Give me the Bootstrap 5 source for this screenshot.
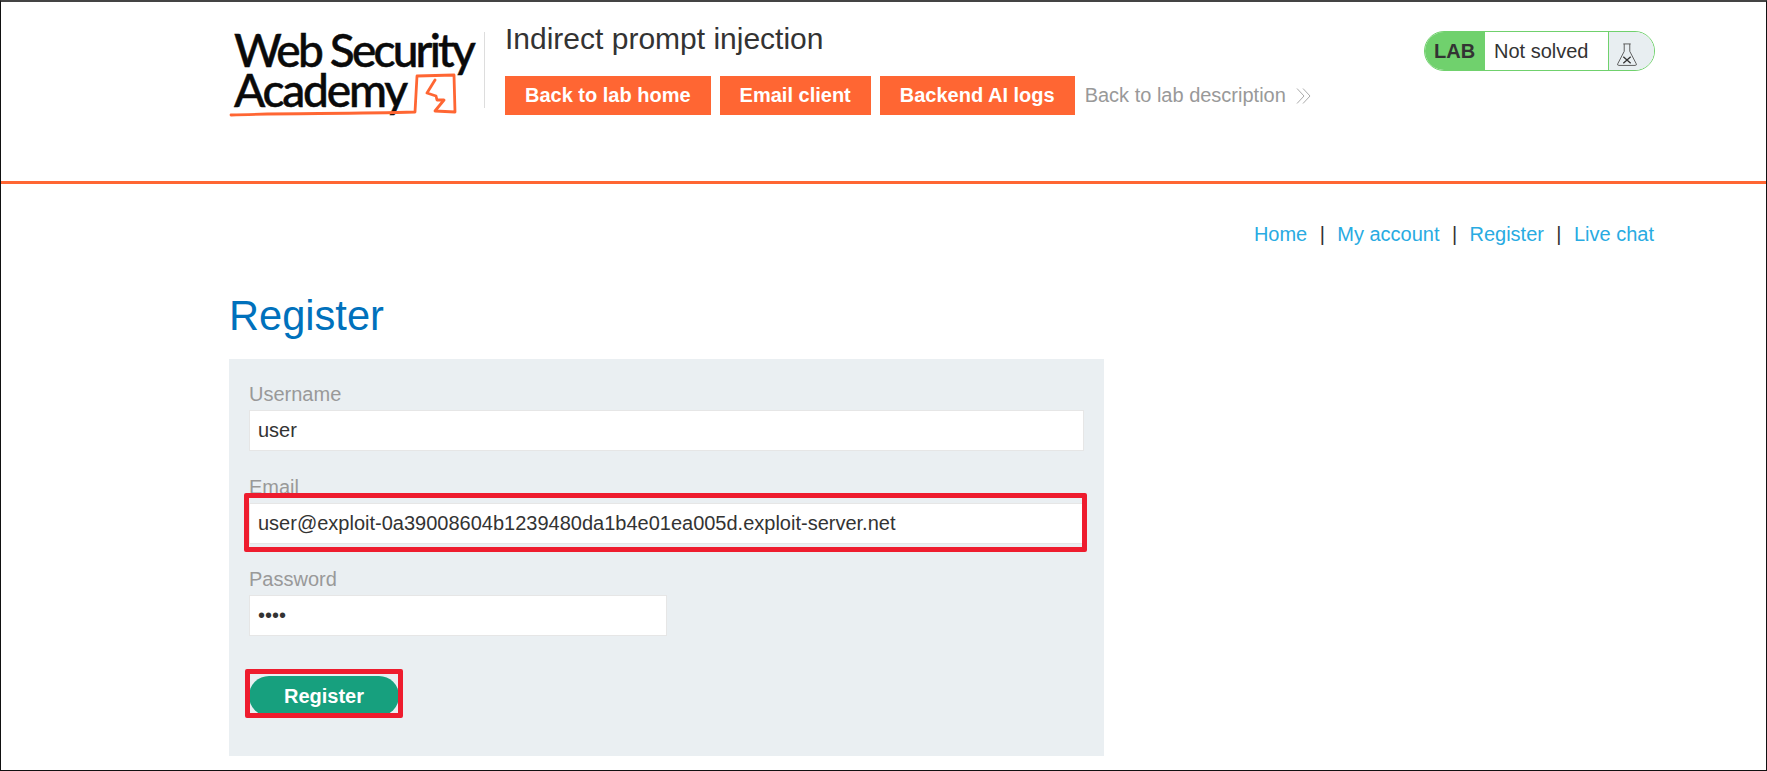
<!DOCTYPE html>
<html lang="en"><head><meta charset="utf-8"><title>Register</title>
<link rel="stylesheet" href="https://cdn.jsdelivr.net/npm/bootstrap@5.3.0/dist/css/bootstrap.min.css">
<style>
html,body{height:100%}
body{font-family:"Liberation Sans",Arial,sans-serif;color:#333;background:#fff;overflow:hidden}
.frame{height:771px;border:1px solid #111;border-top:2px solid #444;overflow:hidden;position:relative}
.topbar{height:179px;border-bottom:3px solid #ff6633;box-sizing:content-box;padding-left:229px;padding-right:111px}
.brand-logo{width:254px;height:90px;margin-top:28px;flex:none;overflow:visible}
.logo-word{font-family:Lato,sans-serif;font-weight:500;font-size:46px;fill:#0a0a0a;stroke:#0a0a0a;stroke-width:.5px;letter-spacing:-2.800px}
.logo-word-low{letter-spacing:-2.200px}
.brand-sep{width:1px;height:76px;background:#ddd;margin:30px 20px 0 0;flex:none}
.lab-title{font-size:30px;line-height:34px;margin:20px 0 0;font-weight:400;color:#333}
.lab-links{margin-top:20px;gap:9px}
.lab-btn{background:#ff6633;color:#fff;font-weight:700;font-size:20px;height:39px;line-height:39px;padding:0 20px;text-decoration:none;display:block}
.lab-back{color:#999;font-size:20px;text-decoration:none;line-height:39px;gap:10px;margin-left:1px}
.status-pill{width:231px;height:40px;margin-top:29px;border:1px solid #70d16d;border-radius:20px;overflow:hidden;flex:none;font-size:20px}
.status-lab{background:#70d16d;width:60px;font-weight:700;color:#333;padding-left:9px;line-height:38px}
.status-text{flex:1;background:#fff;line-height:38px;padding-left:9px;border-right:1px solid #70d16d}
.status-icon{width:45px;background:#e8eef1;padding:6px 0 0 7px}
.page-nav{padding:38px 112px 0 0;font-size:20px;line-height:24px;color:#333}
.page-nav a{color:#29abe2;text-decoration:none}
.page-nav i{font-style:normal;margin:0 12.400px;color:#333}
.page-head{font-size:41.600px;font-weight:400;color:#0071bc;margin:47px 0 0 228px;line-height:46px}
.reg-panel{width:875px;height:397px;margin:20px 0 0 228px;background:#eaeff2;padding:24px 20px 0;box-sizing:border-box}
.reg-label{display:block;color:#999;font-size:20px;line-height:22px;margin:0 0 5px}
.reg-input{display:block;width:100%;height:41px;border:1px solid #e6e6e6;background:#fff;font-family:inherit;font-size:20px;color:#333;padding:0 8px;margin:0 0 24.500px;outline:0;border-radius:0}
.reg-short{width:418px}
.reg-btn{background:#17a07e;border:0;color:#fff;font-weight:700;font-size:20px;width:150px;height:40px;border-radius:20px;margin-top:40px;display:block}
.mark-box{position:absolute;border:5px solid #ee1c2e;border-radius:2px;pointer-events:none}
.mark-email{left:243px;top:491px;width:843px;height:59px}
.mark-reg{left:244px;top:667px;width:158px;height:49px}
</style></head><body>
<div class="frame">
<header class="topbar d-flex">
<svg class="brand-logo" viewBox="0 0 254 90" aria-label="Web Security Academy">
<text class="logo-word" x="4" y="37">Web Security</text>
<text class="logo-word logo-word-low" x="4" y="77">Academy</text>
<path d="M1 85C50 83 120 84 185 82L187 46L224 45L225 82L205 81L214 70L207 70L206 66L197 63L205 50" fill="none" stroke="#ff6633" stroke-width="2.800" stroke-linejoin="round" stroke-linecap="round"/>
</svg>
<div class="brand-sep"></div>
<div class="flex-grow-1">
<h2 class="lab-title">Indirect prompt injection</h2>
<div class="lab-links d-flex">
<a class="lab-btn" href="#">Back to lab home</a>
<a class="lab-btn" href="#">Email client</a>
<a class="lab-btn" href="#">Backend AI logs</a>
<a class="lab-back d-flex align-items-center" href="#">Back to lab description
<svg width="15" height="16" viewBox="0 0 15 16" fill="none" stroke="#aaa" stroke-width="1"><path d="M1 .5l7 7.500-7 7.500M7 .5l7 7.500-7 7.500"/></svg></a>
</div></div>
<div class="status-pill d-flex">
<div class="status-lab">LAB</div><div class="status-text">Not solved</div>
<div class="status-icon"><svg width="22" height="24" viewBox="0 0 23 26" fill="none" stroke="#555" stroke-width="1"><path d="M7.500 1h8M8.500 1v8L1.500 22.500q-.7 1.800 1 1.800h18q1.700 0 1-1.800L14.500 9V1"/><path d="M7.500 15l8 7M15.500 15l-8 7" stroke="#333" stroke-width="1.400"/></svg></div>
</div>
</header>
<nav class="page-nav text-end"><a href="#">Home</a><i>|</i><a href="#">My account</a><i>|</i><a href="#">Register</a><i>|</i><a href="#">Live chat</a></nav>
<h1 class="page-head">Register</h1>
<form class="reg-panel">
<label class="reg-label">Username</label><input class="reg-input" value="user">
<label class="reg-label">Email</label><input class="reg-input" value="user@exploit-0a39008604b1239480da1b4e01ea005d.exploit-server.net">
<label class="reg-label">Password</label><input class="reg-input reg-short" type="password" value="pass">
<button type="button" class="reg-btn">Register</button>
</form>
<div class="mark-box mark-email"></div><div class="mark-box mark-reg"></div>
</div>
<script src="https://cdn.jsdelivr.net/npm/bootstrap@5.3.0/dist/js/bootstrap.bundle.min.js"></script>
</body></html>
